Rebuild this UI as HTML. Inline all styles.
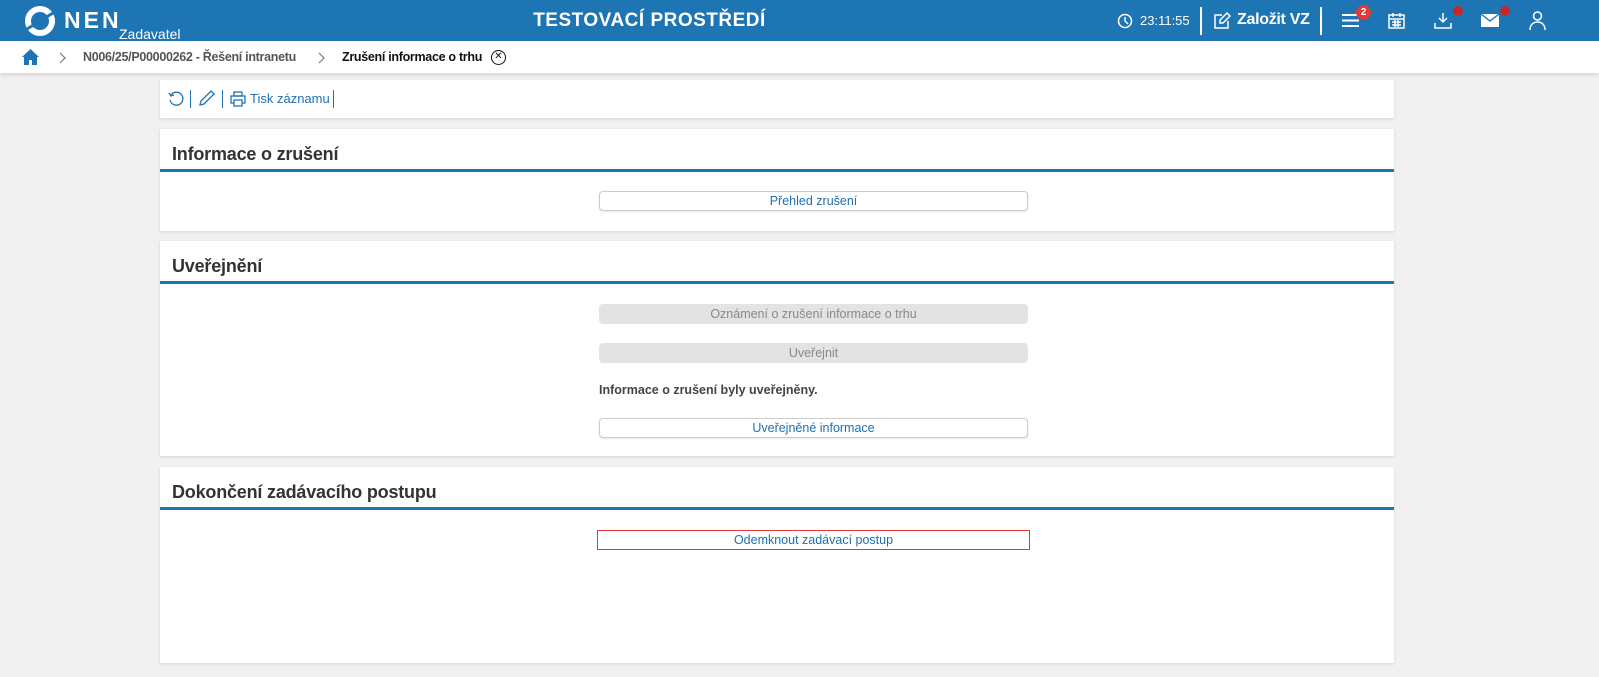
<!DOCTYPE html>
<html><head><meta charset="utf-8"><style>
*{box-sizing:border-box;margin:0;padding:0}
body{width:1599px;height:677px;overflow:hidden;background:#f1f1f1;font-family:"Liberation Sans",Arial,sans-serif;position:relative}
.hdr{position:absolute;left:0;top:0;width:1599px;height:41px;background:#1e75b3;color:#fff}
.bc{position:absolute;left:0;top:41px;width:1599px;height:32px;background:#fff;box-shadow:0 2px 4px rgba(0,0,0,.12);font-size:12.5px;font-weight:bold;letter-spacing:-0.3px}
.panel{position:absolute;left:160px;width:1234px;background:#fff;box-shadow:0 1px 3px rgba(0,0,0,.12)}
.panel h2{position:absolute;left:12px;font-size:18px;font-weight:bold;color:#333;letter-spacing:-0.2px}
.line{position:absolute;left:0;width:1234px;height:3px;background:#1e75b3}
.btn{position:absolute;left:439px;width:429px;height:20px;border:1px solid #ccc;border-radius:4px;font-size:12.5px;color:#1e6fb0;text-align:center;line-height:18px;background:#fff;box-shadow:0 1px 2px rgba(0,0,0,.1)}
.dis{background:#e3e3e3;border-color:#e3e3e3;color:#888;box-shadow:none}
</style></head><body>
<div class="hdr">
<svg style="position:absolute;left:24px;top:5px" width="32" height="32" viewBox="0 0 32 32"><circle cx="16" cy="16" r="12" fill="none" stroke="#fff" stroke-width="6"/><path d="M3 24 L29 8" stroke="#1e75b3" stroke-width="3"/></svg>
<div style="position:absolute;left:64px;top:7px;font-size:23px;font-weight:bold;letter-spacing:3px">NEN</div>
<div style="position:absolute;left:119px;top:26px;font-size:14px">Zadavatel</div>
<div style="position:absolute;left:0;width:1299px;top:10px;text-align:center;font-size:19px;font-weight:bold;letter-spacing:.5px">TESTOVACÍ PROSTŘEDÍ</div>
<svg style="position:absolute;left:1117px;top:13px" width="16" height="16" viewBox="0 0 16 16" fill="none" stroke="#fff" stroke-width="1.5"><circle cx="8" cy="8" r="6.5"/><path d="M8 4v4l3 3"/></svg>
<div style="position:absolute;left:1140px;top:13px;font-size:13px">23:11:55</div>
<div style="position:absolute;left:1200px;top:7px;width:2px;height:28px;background:#fff"></div>
<svg style="position:absolute;left:1213px;top:12px" width="18" height="18" viewBox="0 0 18 18" fill="none" stroke="#fff" stroke-width="1.5"><path d="M9 3H2v13h13V9"/><path d="M14 1l3 3-7 7H7V8z"/></svg>
<div style="position:absolute;left:1237px;top:11px;font-size:16px;font-weight:bold;letter-spacing:-0.3px">Založit VZ</div>
<div style="position:absolute;left:1320px;top:7px;width:2px;height:28px;background:#fff"></div>
<svg style="position:absolute;left:1342px;top:13px" width="17" height="15" viewBox="0 0 17 15" stroke="#fff" stroke-width="2"><path d="M0 2h17M0 7.5h17M0 13h17"/></svg>
<div style="position:absolute;left:1356px;top:5px;width:15px;height:15px;border-radius:50%;background:#e53935;font-size:10px;font-weight:bold;text-align:center;line-height:15px">2</div>
<svg style="position:absolute;left:1388px;top:12px" width="17" height="17" viewBox="0 0 17 17" fill="none" stroke="#fff" stroke-width="1.5"><rect x="1" y="3" width="15" height="13"/><path d="M1 7h15M5 1v4M12 1v4M4 10h9M4 13h9M7 8v7M10 8v7"/></svg>
<svg style="position:absolute;left:1434px;top:12px" width="18" height="17" viewBox="0 0 18 17" fill="none" stroke="#fff" stroke-width="1.5"><path d="M9 1v9M5 6l4 4 4-4M1 11v5h16v-5"/></svg>
<div style="position:absolute;left:1453px;top:6px;width:10px;height:10px;border-radius:50%;background:#c62828"></div>
<svg style="position:absolute;left:1481px;top:14px" width="18" height="13" viewBox="0 0 18 13"><rect width="18" height="13" fill="#fff"/><path d="M0 0l9 7 9-7" fill="none" stroke="#1e75b3" stroke-width="1.3"/></svg>
<div style="position:absolute;left:1500px;top:6px;width:10px;height:10px;border-radius:50%;background:#c62828"></div>
<svg style="position:absolute;left:1529px;top:11px" width="17" height="19" viewBox="0 0 17 19" fill="none" stroke="#fff" stroke-width="1.5"><circle cx="8.5" cy="5" r="4"/><path d="M1 19c0-5 3-8 7.5-8S16 14 16 19"/></svg>
</div>
<div class="bc">
<svg style="position:absolute;left:22px;top:8px" width="17" height="16" viewBox="0 0 17 16" fill="#1e75b3"><path d="M8.5 0L0 8h2v8h5v-5h3v5h5V8h2z"/></svg>
<svg style="position:absolute;left:59px;top:11px" width="7" height="12" viewBox="0 0 7 12" fill="none" stroke="#777" stroke-width="1.2"><path d="M1 1l5 5-5 5"/></svg>
<span style="position:absolute;left:83px;top:9px;color:#555">N006/25/P00000262 - Řešení intranetu</span>
<svg style="position:absolute;left:318px;top:11px" width="7" height="12" viewBox="0 0 7 12" fill="none" stroke="#777" stroke-width="1.2"><path d="M1 1l5 5-5 5"/></svg>
<span style="position:absolute;left:342px;top:9px;color:#111">Zrušení informace o trhu</span>
<div style="position:absolute;left:491px;top:9px;width:15px;height:15px;border:1.5px solid #111;border-radius:50%;font-size:10px;text-align:center;line-height:12px;color:#111;font-weight:normal;letter-spacing:0">✕</div>
</div>
<div class="panel" style="top:80px;height:38px">
<svg style="position:absolute;left:8px;top:11px" width="16" height="16" viewBox="0 0 16 16" fill="none" stroke="#1e75b3" stroke-width="1.3"><path d="M3 4A6.5 6.5 0 1 1 2 9"/><path d="M1 2l2 3 3-1"/></svg>
<div style="position:absolute;left:30px;top:10px;width:1px;height:18px;background:#1e75b3"></div>
<svg style="position:absolute;left:39px;top:10px" width="16" height="17" viewBox="0 0 16 17" fill="none" stroke="#1e75b3" stroke-width="1.3"><path d="M12 1l3 3-10 10-4 1 1-4z"/></svg>
<div style="position:absolute;left:62px;top:10px;width:1px;height:18px;background:#1e75b3"></div>
<svg style="position:absolute;left:70px;top:11px" width="16" height="16" viewBox="0 0 16 16" fill="none" stroke="#1e75b3" stroke-width="1.3"><rect x="4" y="1" width="8" height="4"/><rect x="1" y="5" width="14" height="7"/><rect x="4" y="9" width="8" height="6" fill="#fff"/></svg>
<span style="position:absolute;left:90px;top:11px;font-size:13px;color:#1e6fb0">Tisk záznamu</span>
<div style="position:absolute;left:173px;top:10px;width:1px;height:18px;background:#1e75b3"></div>
</div>
<div class="panel" style="top:129px;height:102px">
<h2 style="top:15px">Informace o zrušení</h2><div class="line" style="top:40px"></div>
<div class="btn" style="top:62px">Přehled zrušení</div>
</div>
<div class="panel" style="top:241px;height:215px">
<h2 style="top:15px">Uveřejnění</h2><div class="line" style="top:40px"></div>
<div class="btn dis" style="top:63px">Oznámení o zrušení informace o trhu</div>
<div class="btn dis" style="top:102px">Uveřejnit</div>
<div style="position:absolute;left:439px;top:142px;font-size:12.5px;font-weight:bold;color:#444">Informace o zrušení byly uveřejněny.</div>
<div class="btn" style="top:177px">Uveřejněné informace</div>
</div>
<div class="panel" style="top:467px;height:196px">
<h2 style="top:15px">Dokončení zadávacího postupu</h2><div class="line" style="top:40px"></div>
<div class="btn" style="top:63px;left:437px;width:433px;border:1px solid #e53935;border-radius:0;box-shadow:none">Odemknout zadávací postup</div>
</div>
</body></html>
